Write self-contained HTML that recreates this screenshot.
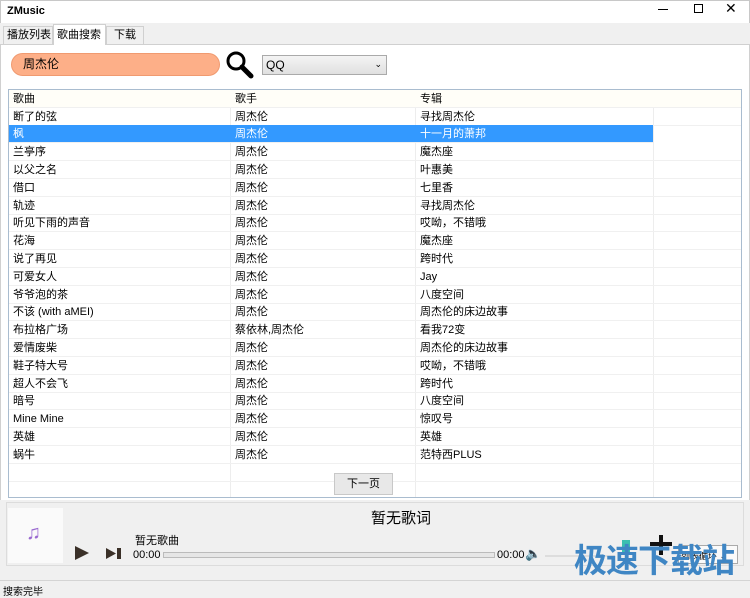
<!DOCTYPE html>
<html><head><meta charset="utf-8"><style>
*{margin:0;padding:0;box-sizing:border-box}
body{width:750px;height:597px;position:relative;background:#f0f0f0;font-family:"Liberation Sans","Noto Sans CJK SC",sans-serif;font-size:11px;color:#000;overflow:hidden}
.a{position:absolute;white-space:nowrap}
.row{position:absolute;left:9px;width:732px;height:18px;border-bottom:1px solid #f0f0f0}
.row span{position:absolute;top:2px;white-space:nowrap;line-height:14px;height:14px}
.c1{left:4px}.c2{left:226px}.c3{left:411px}
.sel{background:#3399ff;color:#fff;width:644px}
</style></head><body>
<div class="a" style="left:0;top:0;width:750px;height:23px;background:#fff;border:1px solid #c8c8c8;border-bottom:none"></div>
<div class="a" style="left:7px;top:5px;font-weight:bold;font-size:11px">ZMusic</div>
<div class="a" style="left:658px;top:9px;width:10px;height:1px;background:#000"></div>
<div class="a" style="left:694px;top:4px;width:9px;height:9px;border:1px solid #000"></div>
<div class="a" style="left:725px;top:0px;font-size:14px">✕</div>
<div class="a" style="left:0;top:44px;width:750px;height:536px;background:#fff;border:1px solid #d0d0d0"></div>
<div class="a" style="left:3px;top:26px;width:50px;height:18px;border:1px solid #d0d0d0;border-bottom:none;background:#f0f0f0;padding:2px 3px;line-height:13px">播放列表</div>
<div class="a" style="left:53px;top:24px;width:53px;height:21px;border:1px solid #d0d0d0;border-bottom:none;background:#fff;padding:3px 3px;line-height:14px">歌曲搜索</div>
<div class="a" style="left:106px;top:26px;width:38px;height:18px;border:1px solid #d0d0d0;border-bottom:none;background:#f0f0f0;padding:2px 7px;line-height:13px">下载</div>
<div class="a" style="left:11px;top:53px;width:209px;height:23px;background:#fdaf88;border:1px solid #f09a70;border-radius:12px;padding:3px 11px;font-size:12px;line-height:15px">周杰伦</div>
<svg class="a" style="left:225px;top:50px" width="30" height="30" viewBox="0 0 30 30"><circle cx="11" cy="11" r="8" fill="none" stroke="#000" stroke-width="3"/><line x1="17" y1="17" x2="26" y2="26" stroke="#000" stroke-width="5" stroke-linecap="round"/></svg>
<div class="a" style="left:262px;top:55px;width:125px;height:20px;border:1px solid #aaa;background:linear-gradient(#f4f4f4,#e0e0e0);padding:3px 3px;font-size:12px;line-height:13px">QQ<span style="position:absolute;right:4px;top:2px;font-size:9px">⌄</span></div>
<div class="a" style="left:8px;top:89px;width:734px;height:409px;border:1px solid #a9bccf;background:#fff"></div>
<div class="a" style="left:230px;top:90px;width:1px;height:407px;background:#ededed"></div>
<div class="a" style="left:415px;top:90px;width:1px;height:407px;background:#ededed"></div>
<div class="a" style="left:653px;top:90px;width:1px;height:407px;background:#ededed"></div>
<div class="row" style="top:90px;background:#fffef8"><span class="c1">歌曲</span><span class="c2">歌手</span><span class="c3">专辑</span></div>
<div class="row" style="top:107.5px"><span class="c1">断了的弦</span><span class="c2">周杰伦</span><span class="c3">寻找周杰伦</span></div>
<div class="row sel" style="top:125.3px"><span class="c1">枫</span><span class="c2">周杰伦</span><span class="c3">十一月的萧邦</span></div>
<div class="row" style="top:143.1px"><span class="c1">兰亭序</span><span class="c2">周杰伦</span><span class="c3">魔杰座</span></div>
<div class="row" style="top:160.9px"><span class="c1">以父之名</span><span class="c2">周杰伦</span><span class="c3">叶惠美</span></div>
<div class="row" style="top:178.7px"><span class="c1">借口</span><span class="c2">周杰伦</span><span class="c3">七里香</span></div>
<div class="row" style="top:196.5px"><span class="c1">轨迹</span><span class="c2">周杰伦</span><span class="c3">寻找周杰伦</span></div>
<div class="row" style="top:214.3px"><span class="c1">听见下雨的声音</span><span class="c2">周杰伦</span><span class="c3">哎呦，不错哦</span></div>
<div class="row" style="top:232.1px"><span class="c1">花海</span><span class="c2">周杰伦</span><span class="c3">魔杰座</span></div>
<div class="row" style="top:249.9px"><span class="c1">说了再见</span><span class="c2">周杰伦</span><span class="c3">跨时代</span></div>
<div class="row" style="top:267.7px"><span class="c1">可爱女人</span><span class="c2">周杰伦</span><span class="c3">Jay</span></div>
<div class="row" style="top:285.5px"><span class="c1">爷爷泡的茶</span><span class="c2">周杰伦</span><span class="c3">八度空间</span></div>
<div class="row" style="top:303.3px"><span class="c1">不该 (with aMEI)</span><span class="c2">周杰伦</span><span class="c3">周杰伦的床边故事</span></div>
<div class="row" style="top:321.1px"><span class="c1">布拉格广场</span><span class="c2">蔡依林,周杰伦</span><span class="c3">看我72变</span></div>
<div class="row" style="top:338.9px"><span class="c1">爱情废柴</span><span class="c2">周杰伦</span><span class="c3">周杰伦的床边故事</span></div>
<div class="row" style="top:356.7px"><span class="c1">鞋子特大号</span><span class="c2">周杰伦</span><span class="c3">哎呦，不错哦</span></div>
<div class="row" style="top:374.5px"><span class="c1">超人不会飞</span><span class="c2">周杰伦</span><span class="c3">跨时代</span></div>
<div class="row" style="top:392.3px"><span class="c1">暗号</span><span class="c2">周杰伦</span><span class="c3">八度空间</span></div>
<div class="row" style="top:410.1px"><span class="c1">Mine Mine</span><span class="c2">周杰伦</span><span class="c3">惊叹号</span></div>
<div class="row" style="top:427.9px"><span class="c1">英雄</span><span class="c2">周杰伦</span><span class="c3">英雄</span></div>
<div class="row" style="top:445.7px"><span class="c1">蜗牛</span><span class="c2">周杰伦</span><span class="c3">范特西PLUS</span></div>
<div class="row" style="top:463.5px"></div>
<div class="a" style="left:334px;top:473px;width:59px;height:22px;border:1px solid #c8c8c8;background:#e8e8e8;text-align:center;padding-top:4px;line-height:13px">下一页</div>
<div class="a" style="left:0;top:500px;width:750px;height:80px;background:#f0f0f0"></div>
<div class="a" style="left:6px;top:502px;width:738px;height:64px;border:1px solid #dcdcdc"></div>
<div class="a" style="left:8px;top:508px;width:55px;height:55px;background:#fafafa"></div>
<div class="a" style="left:26px;top:522px;font-size:20px;color:#9a6ad0">♫</div>
<div class="a" style="left:371px;top:507px;font-size:15px">暂无歌词</div>
<div class="a" style="left:135px;top:532px">暂无歌曲</div>
<svg class="a" style="left:74px;top:545px" width="50" height="16"><polygon points="1,1 15,8 1,15" fill="#3a3028"/><polygon points="32,3 42,8.5 32,14" fill="#3a3028"/><rect x="43" y="3" width="4" height="11" fill="#3a3028"/></svg>
<div class="a" style="left:133px;top:549px">00:00</div>
<div class="a" style="left:163px;top:552px;width:332px;height:6px;border:1px solid #bbb;background:#e6e6e6"></div>
<div class="a" style="left:497px;top:549px">00:00</div>
<div class="a" style="left:525px;top:546px;font-size:13px">🔈</div>
<div class="a" style="left:545px;top:555px;width:70px;height:2px;background:#ddd"></div>
<div class="a" style="left:622px;top:540px;width:8px;height:14px;background:#3bbfb0"></div>
<div class="a" style="left:650px;top:542px;width:22px;height:4px;background:#111"></div>
<div class="a" style="left:659px;top:535px;width:4px;height:20px;background:#111"></div>
<div class="a" style="left:678px;top:545px;width:60px;height:19px;border:1px solid #aaa;background:#fafafa;font-size:9px;padding:3px 2px">列表循环 ⌄</div>
<div class="a" style="left:574px;top:540px;font-size:33px;font-weight:bold;color:#3f86c4;letter-spacing:-1px;line-height:42px">极速下载站</div>
<div class="a" style="left:0;top:580px;width:750px;height:17px;background:#f0f0f0;border-top:1px solid #d4d4d4;padding:2px 3px;font-size:10px">搜索完毕</div>
</body></html>
